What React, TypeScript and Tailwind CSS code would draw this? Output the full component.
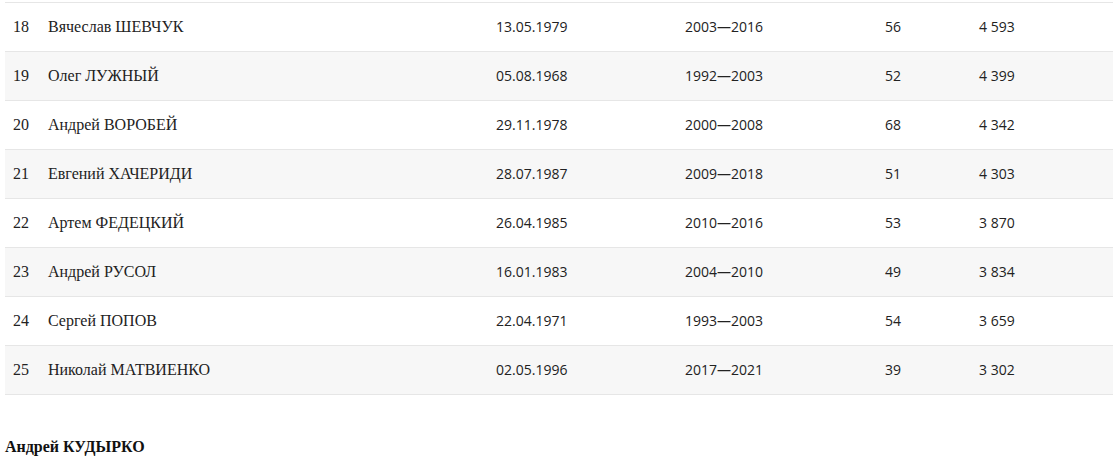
import React from "react";

type Row = {
  n: number;
  name: string;
  born: string;
  years: string;
  games: number;
  goals: string;
};

const rows: Row[] = [
  { n: 18, name: "Вячеслав ШЕВЧУК", born: "13.05.1979", years: "2003—2016", games: 56, goals: "4 593" },
  { n: 19, name: "Олег ЛУЖНЫЙ", born: "05.08.1968", years: "1992—2003", games: 52, goals: "4 399" },
  { n: 20, name: "Андрей ВОРОБЕЙ", born: "29.11.1978", years: "2000—2008", games: 68, goals: "4 342" },
  { n: 21, name: "Евгений ХАЧЕРИДИ", born: "28.07.1987", years: "2009—2018", games: 51, goals: "4 303" },
  { n: 22, name: "Артем ФЕДЕЦКИЙ", born: "26.04.1985", years: "2010—2016", games: 53, goals: "3 870" },
  { n: 23, name: "Андрей РУСОЛ", born: "16.01.1983", years: "2004—2010", games: 49, goals: "3 834" },
  { n: 24, name: "Сергей ПОПОВ", born: "22.04.1971", years: "1993—2003", games: 54, goals: "3 659" },
  { n: 25, name: "Николай МАТВИЕНКО", born: "02.05.1996", years: "2017—2021", games: 39, goals: "3 302" },
];

export default function App() {
  return (
    <div className="min-h-[468px] bg-white px-[5px] pt-[2px] text-[#222]">
      {/* Table */}
      <table className="w-[1108px] table-fixed border-collapse border-t border-[#e6e6e6]">
        <colgroup>
          <col className="w-[35px]" />
          <col className="w-[448px]" />
          <col className="w-[189px]" />
          <col className="w-[200px]" />
          <col className="w-[94px]" />
          <col />
        </colgroup>
        <tbody>
          {rows.map((r, i) => (
            <tr
              key={r.n}
              className={`h-[49px] border-b border-[#e6e6e6] ${i % 2 === 1 ? "bg-[#f7f7f7]" : "bg-white"}`}
            >
              <td className="pl-2 pb-px font-['Liberation_Serif',serif] text-[16px]">{r.n}</td>
              <td className="pl-2 pb-px font-['Liberation_Serif',serif] text-[16px]">{r.name}</td>
              <td className="pl-2 pb-px font-['Open_Sans',sans-serif] text-[14px]">{r.born}</td>
              <td className="pl-2 pb-px font-['Open_Sans',sans-serif] text-[14px]">{r.years}</td>
              <td className="pl-2 pb-px font-['Open_Sans',sans-serif] text-[14px]">{r.games}</td>
              <td className="pl-2 pb-px font-['Open_Sans',sans-serif] text-[14px]">{r.goals}</td>
            </tr>
          ))}
        </tbody>
      </table>

      {/* Next section heading */}
      <h3 className="mt-[40px] font-['Liberation_Serif',serif] text-[16px] font-bold text-[#111]">
        Андрей КУДЫРКО
      </h3>
    </div>
  );
}
